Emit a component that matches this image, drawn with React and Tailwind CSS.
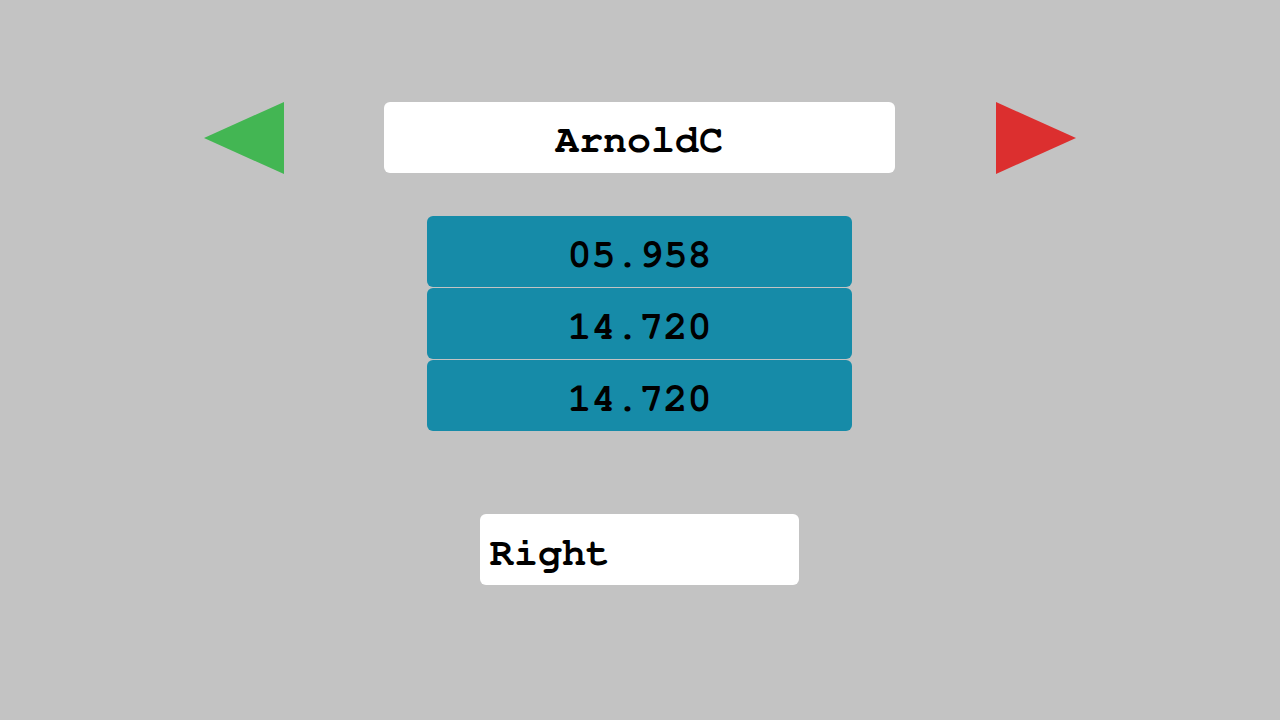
import React from 'react';

const times = ['05.958', '14.720', '14.720'];

function App() {
  return (
    <div
      className="min-h-screen w-full bg-[#c3c3c3] flex flex-col items-center pt-[102px] pr-px"
      style={{ fontFamily: '"Nimbus Mono PS", "Nimbus Mono L", "FreeMono", "Courier 10 Pitch", "Courier New", "Liberation Mono", monospace' }}
    >
      <div className="flex items-start gap-[100px]">
        <svg width="80" height="72" viewBox="0 0 80 72">
          <polygon points="80,0 80,72 0,36" fill="#43b653" />
        </svg>
        <div className="w-[511px] h-[71px] bg-white rounded-md flex items-center justify-center pt-1">
          <span className="text-[40px] font-bold text-black leading-none">ArnoldC</span>
        </div>
        <svg width="80" height="72" viewBox="0 0 80 72" className="ml-px">
          <polygon points="0,0 0,72 80,36" fill="#dc2f2f" />
        </svg>
      </div>

      <div className="mt-[42px] flex flex-col gap-px">
        {times.map((t, i) => (
          <div
            key={i}
            className="w-[425px] h-[71px] bg-[#168ba8] rounded-md flex items-center justify-center pt-1.5"
          >
            <span className="text-[40px] font-bold text-black leading-none">{t}</span>
          </div>
        ))}
      </div>

      <div className="mt-[83px] w-[319px] h-[71px] bg-white rounded-md flex items-center px-[10px] pt-1.5">
        <span className="text-[40px] font-bold text-black leading-none">Right</span>
      </div>
    </div>
  );
}

export default App;
